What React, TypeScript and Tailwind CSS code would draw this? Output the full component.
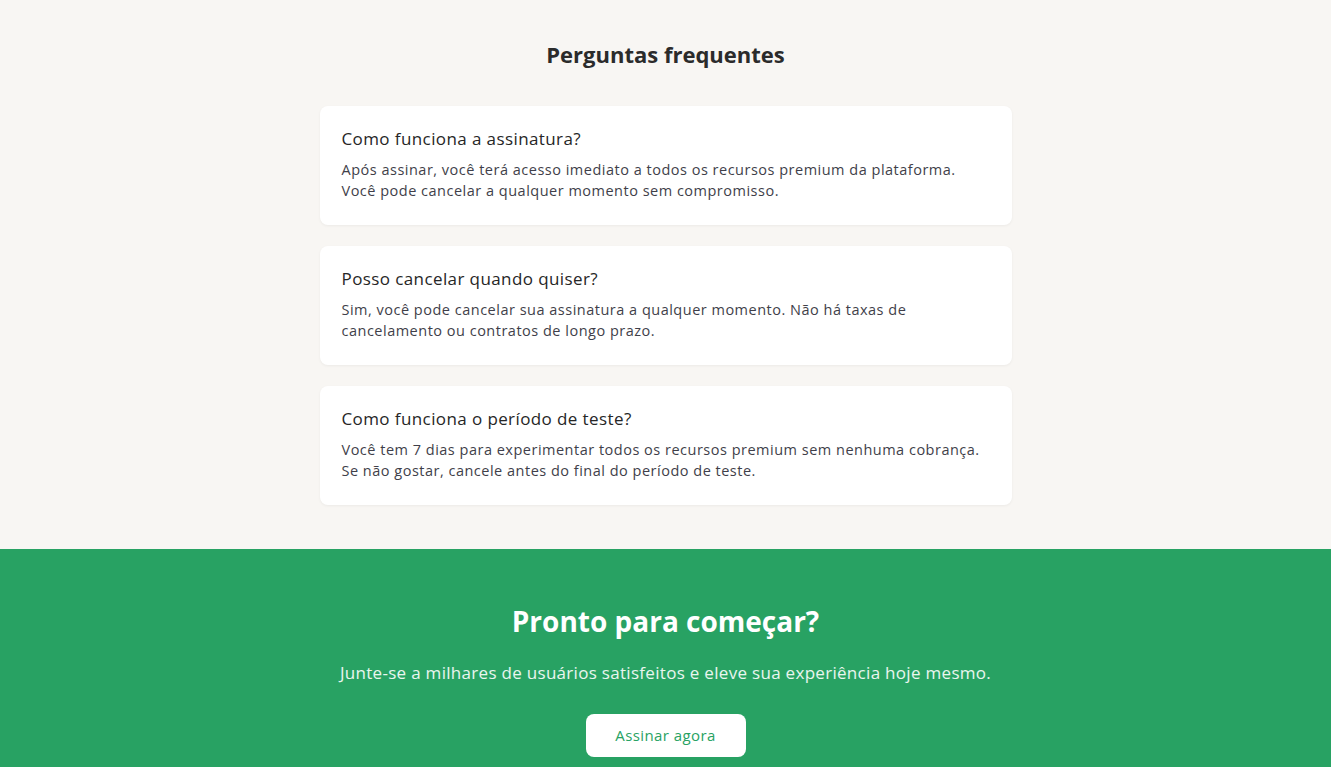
const faqs = [
  {
    q: 'Como funciona a assinatura?',
    a: 'Após assinar, você terá acesso imediato a todos os recursos premium da plataforma. Você pode cancelar a qualquer momento sem compromisso.',
  },
  {
    q: 'Posso cancelar quando quiser?',
    a: 'Sim, você pode cancelar sua assinatura a qualquer momento. Não há taxas de cancelamento ou contratos de longo prazo.',
  },
  {
    q: 'Como funciona o período de teste?',
    a: 'Você tem 7 dias para experimentar todos os recursos premium sem nenhuma cobrança. Se não gostar, cancele antes do final do período de teste.',
  },
];

export default function App() {
  return (
    <div className="min-h-screen bg-[#f8f6f3] font-['Open_Sans',sans-serif]">
      {/* FAQ */}
      <section className="pt-[38px] pb-[44px] px-4">
        <h2 className="text-center text-[22px] font-bold text-[#2b2b2b] leading-8 mb-[36px]">
          Perguntas frequentes
        </h2>
        <div className="max-w-[692px] mx-auto flex flex-col gap-[21px]">
          {faqs.map((f) => (
            <div
              key={f.q}
              className="bg-white rounded-lg px-[22px] pt-[21px] pb-[24px] shadow-[0_1px_3px_rgba(0,0,0,0.05)]"
            >
              <h3 className="text-[17px] tracking-[0.4px] font-medium text-[#262626] leading-6 mb-[8px]">{f.q}</h3>
              <p className="text-[14.5px] tracking-[0.5px] leading-[21px] text-[#3f3f4a]">{f.a}</p>
            </div>
          ))}
        </div>
      </section>

      {/* CTA */}
      <section className="bg-[#28a263] pt-[52px] pb-[10px] px-4 text-center">
        <h2 className="text-[28px] font-bold text-white leading-10">Pronto para começar?</h2>
        <p className="mt-[18px] text-[17px] tracking-[0.3px] text-white/90 leading-7">
          Junte-se a milhares de usuários satisfeitos e eleve sua experiência hoje mesmo.
        </p>
        <button className="mt-[27px] w-[160px] h-[43px] bg-white rounded-lg text-[#28a263] text-[15px] tracking-[0.4px] font-medium">
          Assinar agora
        </button>
      </section>
    </div>
  );
}
